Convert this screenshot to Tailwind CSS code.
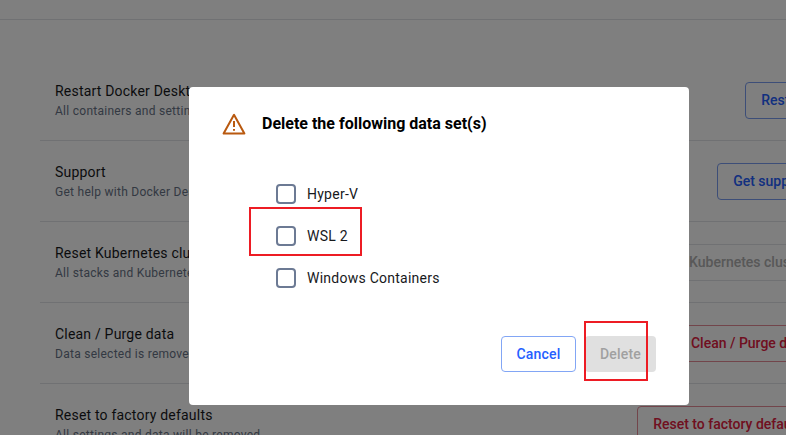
<!doctype html>
<html>
<head>
<meta charset="utf-8">
<script src="https://cdn.jsdelivr.net/npm/@tailwindcss/browser@4"></script>
</head>
<body class="relative h-[435px] w-[786px] overflow-hidden bg-white font-['Roboto',sans-serif] tracking-[0.2px]">
  <div class="h-[20px] border-b border-[#e1e2e6]"></div>
  <div class="ml-[40px] mt-[40px] w-[783px]">
    <div class="flex h-[81px] items-start justify-between border-b border-[#e1e2e6] pl-[15px] pt-[22px]">
      <div class="whitespace-nowrap"><div class="text-[14px] leading-[19px] text-[#17191c]">Restart Docker Desktop</div><div class="text-[12px] leading-[20px] tracking-[0.27px] text-[#677285]">All containers and settings will be lost</div></div>
      <button class="h-[37px] rounded-[4px] border border-[#7a9cf0] px-[15px] text-[14px] font-medium tracking-normal text-[#2560ff] whitespace-nowrap">Restart</button>
    </div>
    <div class="flex h-[81px] items-start justify-between border-b border-[#e1e2e6] pl-[15px] pt-[22px]">
      <div class="whitespace-nowrap"><div class="text-[14px] leading-[19px] text-[#17191c]">Support</div><div class="text-[12px] leading-[20px] tracking-[0.27px] text-[#677285]">Get help with Docker Desktop</div></div>
      <button class="h-[37px] rounded-[4px] border border-[#7a9cf0] px-[15px] text-[14px] font-medium tracking-normal text-[#2560ff] whitespace-nowrap">Get support</button>
    </div>
    <div class="flex h-[81px] items-start justify-between border-b border-[#e1e2e6] pl-[15px] pt-[22px]">
      <div class="whitespace-nowrap"><div class="text-[14px] leading-[19px] text-[#17191c]">Reset Kubernetes cluster</div><div class="text-[12px] leading-[20px] tracking-[0.27px] text-[#677285]">All stacks and Kubernetes resources will be deleted</div></div>
      <button disabled class="h-[37px] rounded-[4px] border border-[#e1e2e6] px-[15px] text-[14px] font-medium tracking-normal text-[#b0b0b0] whitespace-nowrap">Reset Kubernetes cluster</button>
    </div>
    <div class="flex h-[81px] items-start justify-between border-b border-[#e1e2e6] pl-[15px] pt-[22px]">
      <div class="whitespace-nowrap"><div class="text-[14px] leading-[19px] text-[#17191c]">Clean / Purge data</div><div class="text-[12px] leading-[20px] tracking-[0.27px] text-[#677285]">Data selected is removed</div></div>
      <button class="h-[37px] rounded-[4px] border border-[#e58a96] px-[15px] text-[14px] font-medium tracking-normal text-[#e02040] whitespace-nowrap">Clean / Purge data</button>
    </div>
    <div class="flex h-[81px] items-start justify-between pl-[15px] pt-[22px]">
      <div class="whitespace-nowrap"><div class="text-[14px] leading-[19px] text-[#17191c]">Reset to factory defaults</div><div class="text-[12px] leading-[20px] tracking-[0.27px] text-[#677285]">All settings and data will be removed</div></div>
      <button class="h-[37px] rounded-[4px] border border-[#e58a96] px-[15px] text-[14px] font-medium tracking-normal text-[#e02040] whitespace-nowrap">Reset to factory defaults</button>
    </div>
  </div>

  <div class="absolute inset-0 bg-black/50"></div>

  <div class="absolute left-[189px] top-[87px] flex h-[318px] w-[500px] flex-col rounded-[4px] bg-white pl-[33px] pr-[33px] pt-[25px]">
    <div class="flex items-center gap-[16px]">
      <svg class="h-[24px] w-[24px] shrink-0" viewBox="0 0 24 24" fill="none" stroke="#b9590f" stroke-width="2" stroke-linejoin="round"><path d="M12 2.8 1.6 21.6h20.8Z"/><path d="M12 9v6M12 17v1.8" /></svg>
      <h2 class="text-[16px] font-bold leading-[24px] tracking-normal text-black">Delete the following data set(s)</h2>
    </div>
    <div class="ml-[54px] mt-[48px] flex flex-col gap-[22px]">
      <label class="flex items-center gap-[11px] text-[14px] leading-[20px] tracking-[0.25px] text-[#17191c]"><span class="h-[20px] w-[20px] rounded-[4px] border-2 border-[#6c7a94]"></span>Hyper-V</label>
      <label class="flex items-center gap-[11px] text-[14px] leading-[20px] tracking-[0.25px] text-[#17191c]"><span class="h-[20px] w-[20px] rounded-[4px] border-2 border-[#6c7a94]"></span>WSL 2</label>
      <label class="flex items-center gap-[11px] text-[14px] leading-[20px] tracking-[0.25px] text-[#17191c]"><span class="h-[20px] w-[20px] rounded-[4px] border-2 border-[#6c7a94]"></span>Windows Containers</label>
    </div>
    <div class="mt-[48px] flex justify-end gap-[9px]">
      <button class="h-[36px] w-[75px] rounded-[4px] border border-[#82a6f5] text-[14px] font-medium text-[#2560ff]">Cancel</button>
      <button disabled class="h-[36px] w-[71px] rounded-[4px] bg-[#e0e0e0] text-[14px] font-medium text-[#a0a0a0]">Delete</button>
    </div>
  </div>

  <div class="absolute left-[249px] top-[207px] h-[49px] w-[113px] border-2 border-[#ed1c24]"></div>
  <div class="absolute left-[584px] top-[321px] h-[60px] w-[64px] border-2 border-[#ed1c24]"></div>
</body>
</html>
